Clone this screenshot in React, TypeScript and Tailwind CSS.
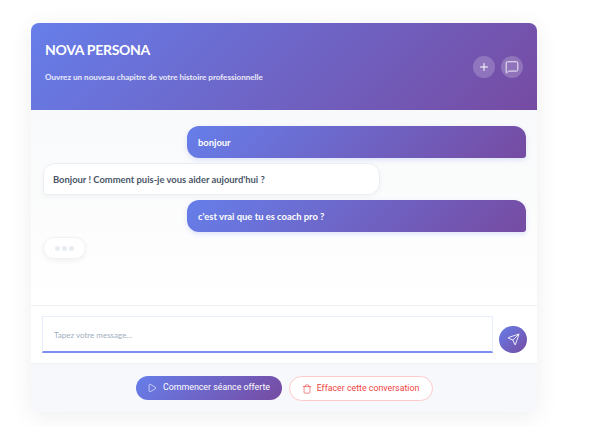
import { MessageSquare, Play, Plus, Send, Trash } from 'lucide-react';

const gradient = 'bg-[linear-gradient(135deg,#667eea_0%,#764ba2_100%)]';

function UserBubble({ text }: { text: string }) {
  return (
    <div className={`self-end w-[339px] h-[32px] flex items-center px-[11px] pt-[2px] rounded-tl-[12px] rounded-tr-[12px] rounded-bl-[12px] rounded-br-[3px] text-white text-[9.4px] font-bold shadow-[0_2px_5px_rgba(102,126,234,0.2)] ${gradient}`}>
      {text}
    </div>
  );
}

function App() {
  return (
    <div className="w-[602px] h-[427px] bg-white pl-[31px] pt-[23px] font-['Lato','Noto_Sans',sans-serif] overflow-hidden">
      <div className="w-[506px] h-[389px] flex flex-col rounded-[8px] overflow-hidden bg-[#f7f8fb] shadow-[0_4px_24px_rgba(0,0,0,0.07)]">
        <header className={`h-[87px] shrink-0 flex items-center justify-between px-[14px] ${gradient}`}>
          <div className="self-start pt-[17px]">
            <h1 className="text-[14px] leading-[20px] font-bold tracking-[-0.3px] text-white">NOVA PERSONA</h1>
            <p className="mt-[11px] text-[8.05px] leading-[12px] font-bold text-white/85">
              Ouvrez un nouveau chapitre de votre histoire professionnelle
            </p>
          </div>
          <div className="flex gap-[6px]">
            <button className="w-[22px] h-[22px] rounded-full bg-white/20 flex items-center justify-center text-white">
              <Plus size={12} strokeWidth={2} />
            </button>
            <button className="w-[22px] h-[22px] rounded-full bg-white/20 flex items-center justify-center text-white">
              <MessageSquare size={14} strokeWidth={1.5} />
            </button>
          </div>
        </header>

        <main className="h-[195px] shrink-0 flex flex-col gap-[5px] pt-[16px] pl-[12px] pr-[11px] bg-[linear-gradient(180deg,#f8f9fa_0%,#ffffff_100%)]">
          <UserBubble text="bonjour" />
          <div className="self-start w-[337px] h-[32px] flex items-center px-[9px] pt-[2px] bg-white rounded-tl-[12px] rounded-tr-[12px] rounded-br-[12px] rounded-bl-[3px] border border-[#eceef5] text-[#4a5568] text-[9.4px] font-bold shadow-[0_2px_5px_rgba(0,0,0,0.04)]">
            Bonjour ! Comment puis-je vous aider aujourd'hui ?
          </div>
          <UserBubble text="c'est vrai que tu es coach pro ?" />
          <div className="self-start w-[43px] h-[22px] flex items-center justify-center gap-[2px] bg-white rounded-[11px] border border-[#f0f1f6] shadow-[0_2px_5px_rgba(0,0,0,0.05)]">
            <span className="w-[5px] h-[5px] rounded-full bg-[#e8ebf2]" />
            <span className="w-[5px] h-[5px] rounded-full bg-[#e8ebf2]" />
            <span className="w-[5px] h-[5px] rounded-full bg-[#e8ebf2]" />
          </div>
        </main>

        <section className="h-[59px] shrink-0 flex items-end gap-[6px] pl-[11px] pr-[10px] pb-[10px] bg-white border-t border-b border-[#eef0f4]">
          <div className="w-[451px] h-[37px] flex items-center px-[11px] pt-[2px] border border-[#e8ecff] border-b-2 border-b-[#7d90f2] text-[8px] text-[#a0aec0]">
            Tapez votre message...
          </div>
          <button className={`w-[28px] h-[27px] rounded-full flex items-center justify-center text-white ${gradient}`}>
            <Send size={13} strokeWidth={1.6} />
          </button>
        </section>

        <footer className="flex-1 flex justify-center items-start gap-[7px] pt-[12px] font-['Roboto',sans-serif] text-[8.8px]">
          <button className={`w-[146px] h-[24px] rounded-full flex items-center justify-center gap-[6px] text-white ${gradient}`}>
            <Play size={10} strokeWidth={1.5} />
            Commencer séance offerte
          </button>
          <button className="w-[144px] h-[25px] rounded-full flex items-center justify-center gap-[5px] bg-white border border-[#fecaca] text-[#ef4444]">
            <Trash size={10} strokeWidth={1.5} />
            Effacer cette conversation
          </button>
        </footer>
      </div>
    </div>
  );
}

export default App;
